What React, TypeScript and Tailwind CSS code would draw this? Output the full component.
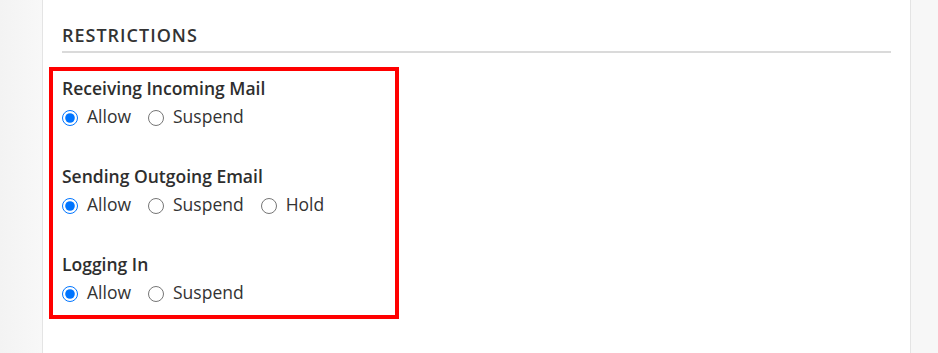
import React from 'react';

type Option = { id: string; label: string };

const GROUPS: { name: string; label: string; options: Option[] }[] = [
  {
    name: 'incoming',
    label: 'Receiving Incoming Mail',
    options: [
      { id: 'allow', label: 'Allow' },
      { id: 'suspend', label: 'Suspend' },
    ],
  },
  {
    name: 'outgoing',
    label: 'Sending Outgoing Email',
    options: [
      { id: 'allow', label: 'Allow' },
      { id: 'suspend', label: 'Suspend' },
      { id: 'hold', label: 'Hold' },
    ],
  },
  {
    name: 'login',
    label: 'Logging In',
    options: [
      { id: 'allow', label: 'Allow' },
      { id: 'suspend', label: 'Suspend' },
    ],
  },
];

function RadioGroup({ name, label, options }: { name: string; label: string; options: Option[] }) {
  const [value, setValue] = React.useState('allow');
  return (
    <div>
      <div className="text-[17.5px] leading-[28px] font-semibold text-[#2e2e2e]">{label}</div>
      <div className="flex items-center h-[28px]">
        {options.map((opt) => (
          <label key={opt.id} className="flex items-center mr-[17px] text-[17.5px] leading-[28px] text-[#333] cursor-pointer">
            <input
              type="radio"
              name={name}
              checked={value === opt.id}
              onChange={() => setValue(opt.id)}
              className="w-4 h-4 m-0 mt-[3px] accent-[#0075ff]"
            />
            <span className="ml-[9px]">{opt.label}</span>
          </label>
        ))}
      </div>
    </div>
  );
}

function App() {
  return (
    <div className="h-[353px] flex bg-[#f7f7f7] overflow-hidden" style={{ fontFamily: '"Open Sans", sans-serif' }}>
      <div className="w-[42px] flex-shrink-0 bg-gradient-to-r from-[#f3f3f3] to-[#f8f8f8]" />
      <main className="w-[869px] flex-shrink-0 bg-white border-x border-[#e4e4e4] px-[19px] pt-[23px]">
        <h2 className="text-[18px] leading-[24px] font-semibold tracking-[1px] uppercase text-[#333] pb-[4px] border-b-2 border-[#dadada]">
          Restrictions
        </h2>
        <div className="mt-[14px] -ml-[13px] w-[350px] border-4 border-[#ff0000] pl-[9px] pt-[3px] pb-[9px] flex flex-col gap-[32px]">
          {GROUPS.map((g) => (
            <RadioGroup key={g.name} {...g} />
          ))}
        </div>
      </main>
      <div className="flex-1" />
    </div>
  );
}

export default App;
